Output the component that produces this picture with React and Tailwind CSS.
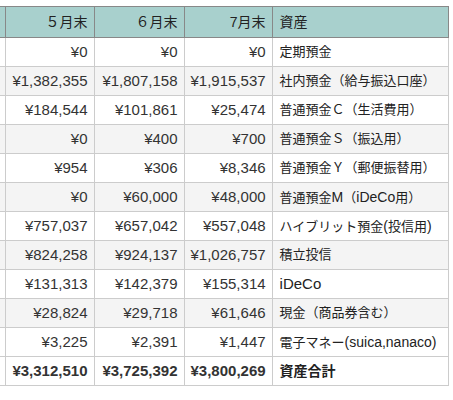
const rows = [
  { may: "¥0", jun: "¥0", jul: "¥0", label: "定期預金" },
  { may: "¥1,382,355", jun: "¥1,807,158", jul: "¥1,915,537", label: "社内預金（給与振込口座）" },
  { may: "¥184,544", jun: "¥101,861", jul: "¥25,474", label: "普通預金Ｃ（生活費用）" },
  { may: "¥0", jun: "¥400", jul: "¥700", label: "普通預金Ｓ（振込用）" },
  { may: "¥954", jun: "¥306", jul: "¥8,346", label: "普通預金Ｙ（郵便振替用）" },
  { may: "¥0", jun: "¥60,000", jul: "¥48,000", label: <>普通預金<span className="text-[14px]">M</span>（<span className="text-[14px]">iDeCo</span>用）</> },
  { may: "¥757,037", jun: "¥657,042", jul: "¥557,048", label: <>ハイブリット預金<span className="text-[14px]">(</span>投信用<span className="text-[14px]">)</span></> },
  { may: "¥824,258", jun: "¥924,137", jul: "¥1,026,757", label: "積立投信" },
  { may: "¥131,313", jun: "¥142,379", jul: "¥155,314", label: <span className="text-[15px]">iDeCo</span> },
  { may: "¥28,824", jun: "¥29,718", jul: "¥61,646", label: "現金（商品券含む）" },
  { may: "¥3,225", jun: "¥2,391", jul: "¥1,447", label: <>電子マネー<span className="text-[14px]">(suica,nanaco)</span></> },
]

// Asset table, cut off on the left like the original page
export default function App() {
  const num = "border border-[#cccccc] px-[6px] text-right text-[15px] text-[#333333] whitespace-nowrap"
  const lab = "border border-[#cccccc] pl-[7px] pr-1 text-left text-[13px] text-[#222222] whitespace-nowrap"
  const th = "border border-[#888888] font-normal text-[#222222] text-[14px]"
  return (
    <div className="w-[453px] h-[400px] bg-white overflow-hidden pt-[6px]" style={{ fontFamily: '"Liberation Sans", "Noto Sans CJK JP", sans-serif' }}>
      <table className="table-fixed border-collapse ml-[-1px]">
        <colgroup>
          <col className="w-[6px]" />
          <col className="w-[89px]" />
          <col className="w-[90px]" />
          <col className="w-[87px]" />
          <col className="w-[176px]" />
        </colgroup>
        <thead>
          <tr className="bg-[#a8d0cd] h-[31px]">
            <th className={th + " border-l-0"}></th>
            <th className={th + " text-right px-[6px]"}>５月末</th>
            <th className={th + " text-right px-[6px]"}>６月末</th>
            <th className={th + " text-right px-[6px]"}>7月末</th>
            <th className={th + " text-left pl-[7px]"}>資産</th>
          </tr>
        </thead>
        <tbody>
          {rows.map((r, i) => (
            <tr key={i} className={i % 2 === 1 ? "bg-[#f4f4f4] h-[29px]" : "bg-white h-[29px]"}>
              <td className="border border-[#cccccc] border-l-0"></td>
              <td className={num}>{r.may}</td>
              <td className={num}>{r.jun}</td>
              <td className={num}>{r.jul}</td>
              <td className={lab}>{r.label}</td>
            </tr>
          ))}
          <tr className="bg-white h-[29px] font-bold">
            <td className="border border-[#cccccc] border-l-0"></td>
            <td className={num + " text-[#111111]"}>¥3,312,510</td>
            <td className={num + " text-[#111111]"}>¥3,725,392</td>
            <td className={num + " text-[#111111]"}>¥3,800,269</td>
            <td className={lab + " text-[14px]"}>資産合計</td>
          </tr>
        </tbody>
      </table>
    </div>
  )
}
